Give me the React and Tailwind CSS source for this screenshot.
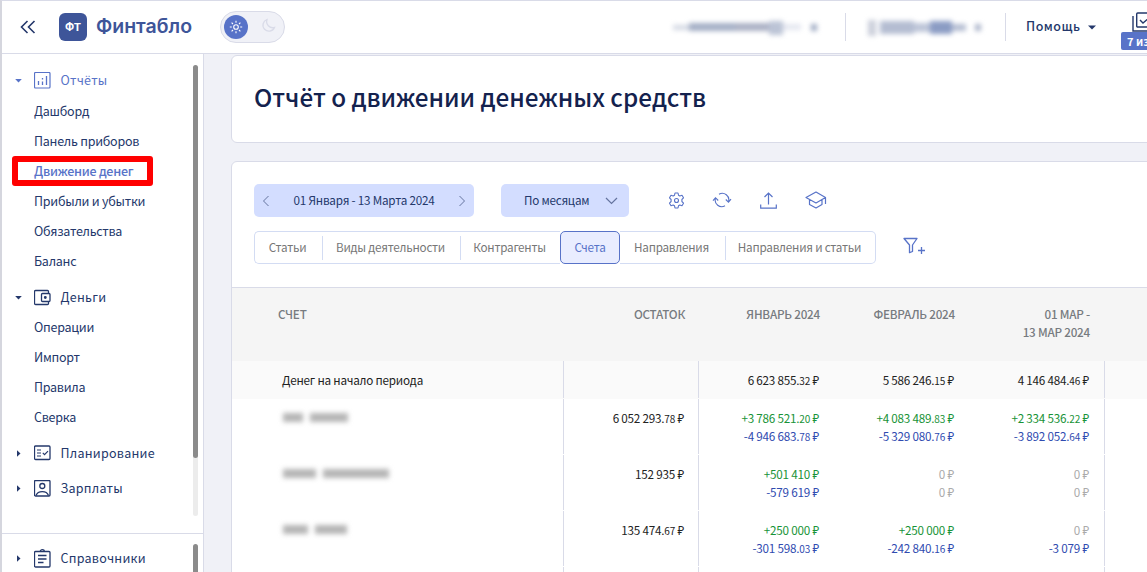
import React from 'react';

const ReportsIcon = () => (
  <svg width="17" height="17" viewBox="0 0 17 17" fill="none" stroke="currentColor">
    <rect x="0.5" y="0.5" width="15.500" height="15.500" rx="1" strokeWidth="1.2" />
    <path d="M4.500 9v4M8.500 6v1.500M8.500 9.500V13M12.500 4v9" strokeWidth="1.3" />
  </svg>
);

const MoneyIcon = () => (
  <svg width="17" height="17" viewBox="0 0 17 17" fill="none" stroke="currentColor" strokeWidth="1.3">
    <path d="M14.500 4V2.500a1 1 0 0 0-1-1h-12a1 1 0 0 0-1 1v12a1 1 0 0 0 1 1h12a1 1 0 0 0 1-1V13" />
    <rect x="7.500" y="4.500" width="8.500" height="8" rx="1" />
    <circle cx="11.300" cy="8.500" r="0.800" fill="currentColor" />
  </svg>
);

const PlanningIcon = () => (
  <svg width="17" height="17" viewBox="0 0 17 17" fill="none" stroke="currentColor" strokeWidth="1.3">
    <rect x="0.500" y="1" width="15.500" height="13.500" rx="1" />
    <path d="M3 5h4M3 8h4M3 11h4M8.800 7.900l1.700 1.700 3.500-3.500" strokeWidth="1.2" />
  </svg>
);

const SalaryIcon = () => (
  <svg width="17" height="17" viewBox="0 0 17 17" fill="none" stroke="currentColor" strokeWidth="1.3">
    <rect x="0.500" y="0.500" width="15.500" height="15.500" rx="1" />
    <circle cx="8.300" cy="6" r="2.500" />
    <path d="M2 15.500c1-2.700 3.300-3.800 6.300-3.800s5.200 1.100 6.200 3.800" />
  </svg>
);

const ReferenceIcon = () => (
  <svg width="17" height="19" viewBox="0 0 17 19" fill="none" stroke="currentColor" strokeWidth="1.3">
    <rect x="0.500" y="2.500" width="15.500" height="15.500" rx="1" />
    <path d="M6.300 2.500a2 1.800 0 0 1 4 0M4 6.500h8.500M4 10h8.500M4 13.500h5.500" />
  </svg>
);

const Caret = ({ open }) => (
  <svg width="7" height="7" viewBox="0 0 7 7" fill="currentColor">
    {open ? <path d="M0.200 2h6.600L3.500 5.500z" /> : <path d="M2 0.300v6.400L5.500 3.500z" />}
  </svg>
);

const GroupTitle = ({ icon: Icon, label, open, className }) => (
  <div className={`flex items-center pl-[13px] ${className}`}>
    <Caret open={open} />
    <span className="ml-3 w-[17px]"><Icon /></span>
    <span className="ml-[9.5px] text-[12.5px] tracking-[0.25px]">{label}</span>
  </div>
);

const reports = ['Дашборд', 'Панель приборов', 'Движение денег', 'Прибыли и убытки', 'Обязательства', 'Баланс'];
const money = ['Операции', 'Импорт', 'Правила', 'Сверка'];

const MenuItem = ({ label }) => {
  const active = label === 'Движение денег';
  return (
    <div className={`relative flex h-[30px] items-center pl-8 text-[12.5px] tracking-[-0.25px] ${active ? 'font-medium text-[#5873c8]' : ''}`}>
      {label}
      {active && <div className="absolute top-0 left-[10px] h-[30px] w-[141px] rounded-[3px] border-[6px] border-[#ff0000]" />}
    </div>
  );
};

const Sidebar = () => (
  <aside className="flex w-[202px] shrink-0 flex-col border-r border-[#d9dbe8] bg-white text-[#24386b]">
    <div className="flex h-[481px] border-b border-[#d9dbe8]">
      <nav className="flex w-[191px] flex-col pt-3">
        <GroupTitle icon={ReportsIcon} label="Отчёты" open className="h-[30px] pb-[2px] text-[#5873c8]" />
        {reports.map((label) => <MenuItem key={label} label={label} />)}
        <GroupTitle icon={MoneyIcon} label="Деньги" open className="mt-[6px] h-[30px]" />
        {money.map((label) => <MenuItem key={label} label={label} />)}
        <GroupTitle icon={PlanningIcon} label="Планирование" className="mt-[3px] h-[36px]" />
        <GroupTitle icon={SalaryIcon} label="Зарплаты" className="h-[34px]" />
      </nav>
      <div className="mt-[11px] h-[451px] w-[5px] rounded-full bg-[#ececec]">
        <div className="h-[393px] rounded-full bg-[#8b8b8b]" />
      </div>
    </div>
    <div className="flex h-[38px] overflow-hidden">
      <GroupTitle icon={ReferenceIcon} label="Справочники" className="mt-[6px] h-[36px] w-[191px]" />
      <div className="mt-[10px] h-[60px] w-[5px] rounded-full bg-[#8b8b8b]" />
    </div>
  </aside>
);

const Header = () => (
  <header className="flex h-[53px] shrink-0 items-center border-b border-[#d9dbe8] bg-white">
    <svg className="ml-[18px] text-[#24386b]" width="16" height="14" viewBox="0 0 16 14" fill="none" stroke="currentColor" strokeWidth="1.6">
      <path d="M7.500 1L1.500 7l6 6M14.500 1L8.500 7l6 6" />
    </svg>
    <div className="ml-[23px] flex h-7 w-7 items-center justify-center rounded-[6px] bg-[#3e5599] font-[Inter] text-[11px] font-bold text-white">ФТ</div>
    <span className="ml-[9px] w-[120px] font-[Inter] text-[19.5px] font-semibold text-[#3e5599]">Финтабло</span>
    <div className="ml-[4px] flex h-8 w-[65px] items-center rounded-full border border-[#d9dbe8] bg-[#f0f1f7] pl-[3px]">
      <span className="flex h-6 w-6 items-center justify-center rounded-full bg-[#5873c8] text-white">
        <svg width="14" height="14" viewBox="0 0 14 14" fill="none" stroke="currentColor" strokeWidth="1.1">
          <circle cx="7" cy="7" r="2.300" />
          <path d="M7 0.800v2M7 11.200v2M0.800 7h2M11.200 7h2M2.600 2.600L4 4M10 10l1.400 1.400M11.400 2.600L10 4M4 10l-1.400 1.400" />
        </svg>
      </span>
      <svg className="mb-[3px] ml-[13px] text-[#d9dbe8]" width="15" height="15" viewBox="0 0 15 15" fill="none" stroke="currentColor" strokeWidth="1.300">
        <path d="M6 1.500a6 6 0 1 0 7.500 8A6.200 6.200 0 0 1 6 1.500z" />
      </svg>
    </div>
    <div className="ml-auto flex items-center text-[#24386b]">
      {/* Hidden account names */}
      <div className="flex w-[172px] items-center blur-[2.500px]">
        <i className="h-[5px] w-[16px] bg-[#d3d8e3]" />
        <i className="h-[8px] w-[46px] bg-[#a3aec5]" />
        <i className="h-[8px] w-[34px] bg-[#aab0c4]" />
        <i className="mt-[2px] h-[14px] w-[14px] bg-[#bcc4d6]" />
        <i className="h-[6px] w-[18px] bg-[#e4e7f0]" />
        <i className="ml-[10px] h-[7px] w-[6px] bg-[#9ca8c2]" />
      </div>
      <div className="h-7 w-px bg-[#d9dbe8]" />
      <div className="flex w-[159px] items-center pl-[22px] blur-[2.500px]">
        <i className="mt-[2px] h-[16px] w-[8px] bg-[#cbcfdb]" />
        <i className="ml-[4px] h-[13px] w-[34px] bg-[#b4bdd2]" />
        <i className="h-[9px] w-[16px] bg-[#bdc5d8]" />
        <i className="h-[13px] w-[22px] bg-[#8b9cc4]" />
        <i className="h-[7px] w-[14px] bg-[#b4bdd2]" />
        <i className="ml-[9px] h-[7px] w-[6px] bg-[#aab3c9]" />
      </div>
      <div className="h-7 w-px bg-[#d9dbe8]" />
      <span className="ml-5 w-[56px] pb-px text-[12.5px] font-medium tracking-[0.500px]">Помощь</span>
      <svg className="ml-[6px]" width="8" height="5" viewBox="0 0 8 5" fill="currentColor"><path d="M0 0.500h8L4 4.500z" /></svg>
      <div className="relative ml-[32px] h-10 w-[19px]">
        <svg className="absolute top-[5px] left-[4px]" width="24" height="20" viewBox="0 0 24 20" fill="none" stroke="currentColor" strokeWidth="1.400">
          <path d="M1 4v15h16" />
          <rect x="4.700" y="1" width="17" height="14" rx="1" />
          <path d="M8 8l3 3 7-6" />
        </svg>
        <span className="absolute top-[25px] -left-[7px] h-[18px] w-10 rounded-[2px] bg-[#5873c8] pl-[6px] text-[11px] leading-[18px] font-bold whitespace-nowrap text-white">7 из</span>
      </div>
    </div>
  </header>
);

const Toolbar = () => (
  <div className="flex h-[33px] items-center text-[#24386b]">
    <div className="flex h-[33px] w-[220px] items-center justify-between rounded-[5px] bg-[#d3ddff] px-2 text-[11.7px] tracking-[-0.220px]">
      <svg width="8" height="12" viewBox="0 0 8 12" fill="none" stroke="#65749f"><path d="M6.500 1L1.500 6l5 5" /></svg>
      <span className="pb-px">01 Января - 13 Марта 2024</span>
      <svg width="8" height="12" viewBox="0 0 8 12" fill="none" stroke="#65749f"><path d="M1.500 1l5 5-5 5" /></svg>
    </div>
    <div className="ml-[27px] flex h-[33px] w-[128px] items-center justify-between rounded-[5px] bg-[#d3ddff] pr-[11px] pl-[23px] text-[11.7px] tracking-[-0.220px]">
      <span className="pb-[2px]">По месяцам</span>
      <svg width="13" height="8" viewBox="0 0 13 8" fill="none" stroke="#65749f" strokeWidth="1.200"><path d="M1 1l5.500 5.500L12 1" /></svg>
    </div>
    <div className="ml-[39px] flex items-center pb-px text-[#5873c8]">
      <svg width="17" height="17" viewBox="0 0 17 17" fill="none" stroke="currentColor" strokeWidth="1.100">
        <path d="M7 1h3l.5 2.200 1.300.8 2.200-.7 1.500 2.500L13.900 7.500v2l1.600 1.700-1.500 2.500-2.200-.7-1.300.8L10 16H7l-.5-2.200-1.300-.8-2.200.7-1.500-2.500 1.600-1.700v-2L1.500 5.800 3 3.300l2.200.7 1.300-.8z" strokeLinejoin="round" />
        <circle cx="8.500" cy="8.500" r="2" />
      </svg>
      <svg className="ml-[27px]" width="20" height="16" viewBox="0 0 20 16" fill="none" stroke="currentColor" strokeWidth="1.100">
        <path d="M7 2.200a6.500 6.500 0 0 1 9.500 7.500M13 13.800A6.500 6.500 0 0 1 3.500 6.300M13.800 7.500l2.700 2.700 2.500-3M1 8.700l2.500-3 2.700 2.800" />
      </svg>
      <svg className="ml-[28px]" width="17" height="17" viewBox="0 0 17 17" fill="none" stroke="currentColor" strokeWidth="1.200">
        <path d="M8.500 12.500V1M4.500 5l4-4 4 4M0.700 12.500v3.700h15.600v-3.700" />
      </svg>
      <svg className="ml-[28px]" width="22" height="18" viewBox="0 0 22 18" fill="none" stroke="currentColor" strokeWidth="1.200" strokeLinejoin="round">
        <path d="M1 6.500L11 1l9.500 5.500L11 12zM4.500 8.500v5L11 17l6-3.500v-5M20.500 6.500V13" />
      </svg>
    </div>
  </div>
);

const tabs = [
  { label: 'Статьи', width: 'w-[69px]' },
  { label: 'Виды деятельности', width: 'w-[138px]' },
  { label: 'Контрагенты', width: 'w-[99px]' },
  { label: 'Счета', width: 'w-[60px]', active: true },
  { label: 'Направления', width: 'w-[106px]' },
  { label: 'Направления и статьи', width: 'w-[150px]' },
];

const Tabs = () => (
  <div className="mt-[14px] flex items-center">
    <div className="flex h-[33px] w-[622px] items-stretch text-[11.7px] tracking-[-0.220px] text-[#777]">
      {tabs.map(({ label, width, active }, i) => (
        <div
          key={label}
          className={`flex shrink-0 items-center ${width} ${active
            ? 'justify-center rounded-[5px] border border-[#5873c8] bg-[#e9edff] text-[#5873c8]'
            : 'border-y border-[#d3dcf3]'}
            ${i === 0 ? 'rounded-l-[5px] border-l' : ''} ${i === 5 ? 'rounded-r-[5px] border-r' : ''}`}
        >
          <span className={active ? 'pb-[2px]' : 'flex-1 pr-[2px] pb-[2px] text-center'}>{label}</span>
          {(i < 2 || i === 4) && <i className="h-6 w-px bg-[#d3dcf3]" />}
        </div>
      ))}
    </div>
    <svg className="-mt-[3px] ml-[27px] text-[#5873c8]" width="22" height="18" viewBox="0 0 22 18" fill="none" stroke="currentColor" strokeWidth="1.300" strokeLinejoin="round">
      <path d="M1 1.500h13L9.500 8v6.500l-3 1.200V8zM15 13.500h7M18.500 10v7" />
    </svg>
  </div>
);

const rows = [
  { name: ['w-[20px]', 'w-[38px]'], left: '6 052 293.78', cells: [['+3 786 521.20', '-4 946 683.78'], ['+4 083 489.83', '-5 329 080.76'], ['+2 334 536.22', '-3 892 052.64']] },
  { name: ['w-[33px]', 'w-[66px]'], left: '152 935', cells: [['+501 410', '-579 619'], ['0', '0'], ['0', '0']] },
  { name: ['w-[25px]', 'w-[32px]'], left: '135 474.67', cells: [['+250 000', '-301 598.03'], ['+250 000', '-242 840.16'], ['0', '-3 079']] },
];

const colorOf = (value) => {
  if (value === '0') return 'text-[#aaaaaa]';
  if (value[0] === '+') return 'text-[#189337]';
  if (value[0] === '-') return 'text-[#304bb0]';
  return 'text-[#222]';
};

const Money = ({ value }) => {
  const [whole, cents] = value.split('.');
  return (
    <div className={`h-[18px] text-right text-[11.7px] leading-[18px] tracking-[-0.220px] whitespace-nowrap ${colorOf(value)}`}>
      {whole}{cents && <>.<span className="text-[10px]">{cents}</span></>} ₽
    </div>
  );
};

const grid = 'grid grid-cols-[332px_135px_135px_135px_136px_60px]';

const Table = () => (
  <div>
    <div className={`${grid} h-[74px] border-t border-[#d9dbe8] bg-[#f5f5f5] pt-[17px] text-right text-[11.7px] leading-[18px] font-medium tracking-[-0.220px] text-[#777b80]`}>
      <span className="pl-[46px] text-left">СЧЕТ</span>
      <span className="pr-[14px]">ОСТАТОК</span>
      <span className="pr-[14px]">ЯНВАРЬ 2024</span>
      <span className="pr-[14px]">ФЕВРАЛЬ 2024</span>
      <span className="pr-[15px]">01 МАР -<br />13 МАР 2024</span>
    </div>
    <div className={`${grid} h-[38px] bg-[#fafafa]`}>
      <div className="h-[37px] border-r border-[#d9dbe8] pt-[10px] pl-[50px] text-[11.7px] leading-[18px] tracking-[-0.220px] text-[#222]">Денег на начало периода</div>
      <div className="h-[37px] border-r border-[#d9dbe8]" />
      <div className="pt-[10px] pr-[15px]"><Money value="6 623 855.32" /></div>
      <div className="pt-[10px] pr-[15px]"><Money value="5 586 246.15" /></div>
      <div className="h-[37px] border-r border-[#d9dbe8] pt-[10px] pr-[15px]"><Money value="4 146 484.46" /></div>
    </div>
    {rows.map((row) => (
      <div key={row.left} className={`${grid} h-[56px]`}>
        <div className="h-[55px] border-r border-[#d9dbe8] pt-[14px] pl-[51px]">
          {/* Hidden account name */}
          <div className="flex h-[9px] gap-[7px] blur-[2.500px]">
            {row.name.map((width) => <i key={width} className={`h-[9px] bg-[#b5b5b5] ${width}`} />)}
          </div>
        </div>
        <div className="h-[55px] border-r border-[#d9dbe8] pt-[10px] pr-[14px]"><Money value={row.left} /></div>
        {row.cells.map((cell, i) => (
          <div key={i} className={`h-[55px] pt-[10px] pr-[15px] ${i === 2 ? 'border-r border-[#d9dbe8]' : ''}`}>
            {cell.map((value, j) => <Money key={j} value={value} />)}
          </div>
        ))}
      </div>
    ))}
    <div className={`${grid} h-[20px]`}>
      <div className="border-r border-[#d9dbe8]" />
      <div className="border-r border-[#d9dbe8]" />
      <div />
      <div />
      <div className="border-r border-[#d9dbe8]" />
    </div>
  </div>
);

const App = () => (
  <div className="flex h-[572px] w-[1147px] flex-col overflow-hidden border-t border-l-2 border-t-[#d9dbe8] border-l-[#d5d6de] bg-white font-['Noto_Sans_CJK_SC','Noto_Sans',sans-serif]">
    <Header />
    <div className="flex min-h-0 flex-1">
      <Sidebar />
      <main className="min-w-0 flex-1 overflow-hidden bg-[#f0f1f7] pt-px pl-[27px]">
        <div className="flex h-[88px] w-[930px] items-center rounded-[6px] border border-[#d9dbe8] bg-white pb-[3px] pl-[22px]">
          <h1 className="text-[24.250px] font-medium text-[#14224e]">Отчёт о движении денежных средств</h1>
        </div>
        <div className="mt-[18px] w-[930px] rounded-[6px] border border-[#d9dbe8] bg-white">
          <div className="h-[125px] pt-[22px] pl-[22px]">
            <Toolbar />
            <Tabs />
          </div>
          <Table />
        </div>
      </main>
    </div>
  </div>
);

export default App;
